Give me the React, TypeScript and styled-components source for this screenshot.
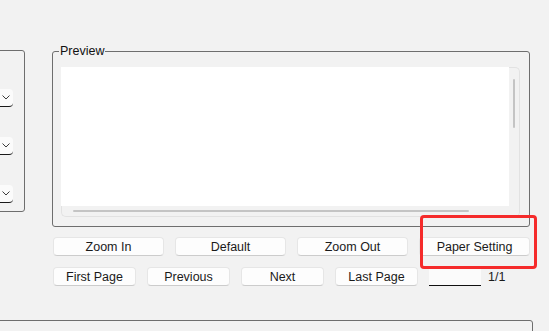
import styled, { createGlobalStyle } from "styled-components";

const GlobalStyle = createGlobalStyle`
  body {
    margin: 0;
    background: #f2f2f2;
    font-family: "Liberation Sans", Arial, sans-serif;
  }
`;

export default function App() {
  return (
    <Page>
      <GlobalStyle />
      <TopRow>
        <SettingsGroup>
          {[0, 1, 2].map((i) => (
            <Combo key={i}>
              <svg width="8" height="5" viewBox="0 0 8 5">
                <path d="M0.5 0.5 L4 4 L7.5 0.5" fill="none" stroke="#3c3c3c" strokeWidth="1" />
              </svg>
            </Combo>
          ))}
        </SettingsGroup>

        <Main>
          <PreviewSet>
            <Legend>Preview</Legend>
            <ScrollBox>
              <Viewport />
              <VTrack>
                <VThumb />
              </VTrack>
              <HTrack>
                <HThumb />
              </HTrack>
              <Corner />
            </ScrollBox>
          </PreviewSet>

          <Controls>
            <ZoomRow>
              <Button>Zoom In</Button>
              <Button>Default</Button>
              <Button>Zoom Out</Button>
              <Button>Paper Setting</Button>
            </ZoomRow>
            <PageRow>
              <Button $width={83}>First Page</Button>
              <Button $width={83}>Previous</Button>
              <Button $width={83}>Next</Button>
              <Button $width={83}>Last Page</Button>
              <PageInput />
              <PageCount>1/1</PageCount>
            </PageRow>
            <Highlight />
          </Controls>
        </Main>
      </TopRow>
      <BottomGroup />
    </Page>
  );
}

const Page = styled.div`
  width: 549px;
  height: 331px;
  overflow: hidden;
  display: flex;
  flex-direction: column;
  background: #f2f2f2;
  color: #1a1a1a;
  font-size: 12.5px;
`;

const TopRow = styled.div`
  display: flex;
  align-items: flex-start;
  padding-top: 44px;
`;

const SettingsGroup = styled.div`
  flex: none;
  box-sizing: border-box;
  width: 121px;
  height: 162px;
  margin: 6px 0 0 -96px;
  padding: 38px 11px 0 0;
  border: 1px solid #6e6e6e;
  border-radius: 3px;
  display: flex;
  flex-direction: column;
  align-items: flex-end;
  gap: 30px;
`;

const Combo = styled.div`
  box-sizing: border-box;
  width: 60px;
  height: 18px;
  background: #fbfbfb;
  border-bottom: 1px solid #1a1a1a;
  border-radius: 0 4px 4px 0;
  display: flex;
  align-items: center;
  justify-content: flex-end;
  padding: 0 3px 1px 0;
`;

const Main = styled.div`
  flex: none;
  width: 478px;
  margin-left: 27px;
`;

const PreviewSet = styled.fieldset`
  margin: 0;
  padding: 0 9px 9px 8px;
  border: 1px solid #6e6e6e;
  border-radius: 3px;
  min-width: 0;
`;

const Legend = styled.legend`
  padding: 0 1px;
  margin-left: -2px;
  font-size: 12.5px;
  line-height: 14px;
  color: #111;
`;

const ScrollBox = styled.div`
  margin-top: 9px;
  height: 150px;
  display: grid;
  grid-template-columns: 1fr 11px;
  grid-template-rows: 1fr 11px;
`;

const Viewport = styled.div`
  background: #ffffff;
`;

const VTrack = styled.div`
  box-sizing: border-box;
  border-top: 1px solid #e2e2e2;
  border-right: 1px solid #e2e2e2;
  border-top-right-radius: 5px;
  padding: 11px 0 0 4px;
`;

const VThumb = styled.div`
  width: 2px;
  height: 49px;
  background: #c4c4c4;
  border-radius: 1px;
`;

const HTrack = styled.div`
  box-sizing: border-box;
  border-bottom: 1px solid #e2e2e2;
  border-left: 1px solid #e2e2e2;
  border-bottom-left-radius: 5px;
  padding: 4px 0 0 11px;
`;

const HThumb = styled.div`
  width: 396px;
  height: 2px;
  background: #c4c4c4;
  border-radius: 1px;
`;

const Corner = styled.div`
  box-sizing: border-box;
  border-right: 1px solid #e2e2e2;
  border-bottom: 1px solid #e2e2e2;
  border-bottom-right-radius: 5px;
`;

const Controls = styled.div`
  position: relative;
  margin: 10px 0 0 1px;
  width: 477px;
  display: flex;
  flex-direction: column;
  gap: 11px;
`;

const ZoomRow = styled.div`
  display: grid;
  grid-template-columns: repeat(4, 1fr);
  column-gap: 11px;
`;

const PageRow = styled.div`
  display: flex;
  align-items: center;
  gap: 11px;
`;

const Button = styled.button<{ $width?: number }>`
  box-sizing: border-box;
  width: ${(p) => (p.$width ? `${p.$width}px` : "auto")};
  height: 19px;
  margin: 0;
  padding: 1px 0 0;
  background: #fdfdfd;
  border: 1px solid #e6e6e6;
  border-bottom-color: #cccccc;
  border-radius: 4px;
  font-family: "Liberation Sans", Arial, sans-serif;
  font-size: 12.5px;
  line-height: 15px;
  color: #1a1a1a;
`;

const PageInput = styled.div`
  box-sizing: border-box;
  width: 52px;
  height: 19px;
  background: #fbfbfb;
  border-bottom: 1px solid #111;
  border-radius: 3px 3px 0 0;
`;

const PageCount = styled.span`
  margin-left: -4px;
  font-size: 12.5px;
  line-height: 14px;
  color: #1a1a1a;
`;

const Highlight = styled.div`
  position: absolute;
  left: 367px;
  top: -22px;
  width: 117px;
  height: 54px;
  box-sizing: border-box;
  border: 3px solid #f52b2b;
  border-radius: 4px;
  pointer-events: none;
`;

const BottomGroup = styled.div`
  flex: none;
  width: 551px;
  height: 40px;
  margin: 34px 0 0 -20px;
  border: 1px solid #6e6e6e;
  border-radius: 3px;
`;
